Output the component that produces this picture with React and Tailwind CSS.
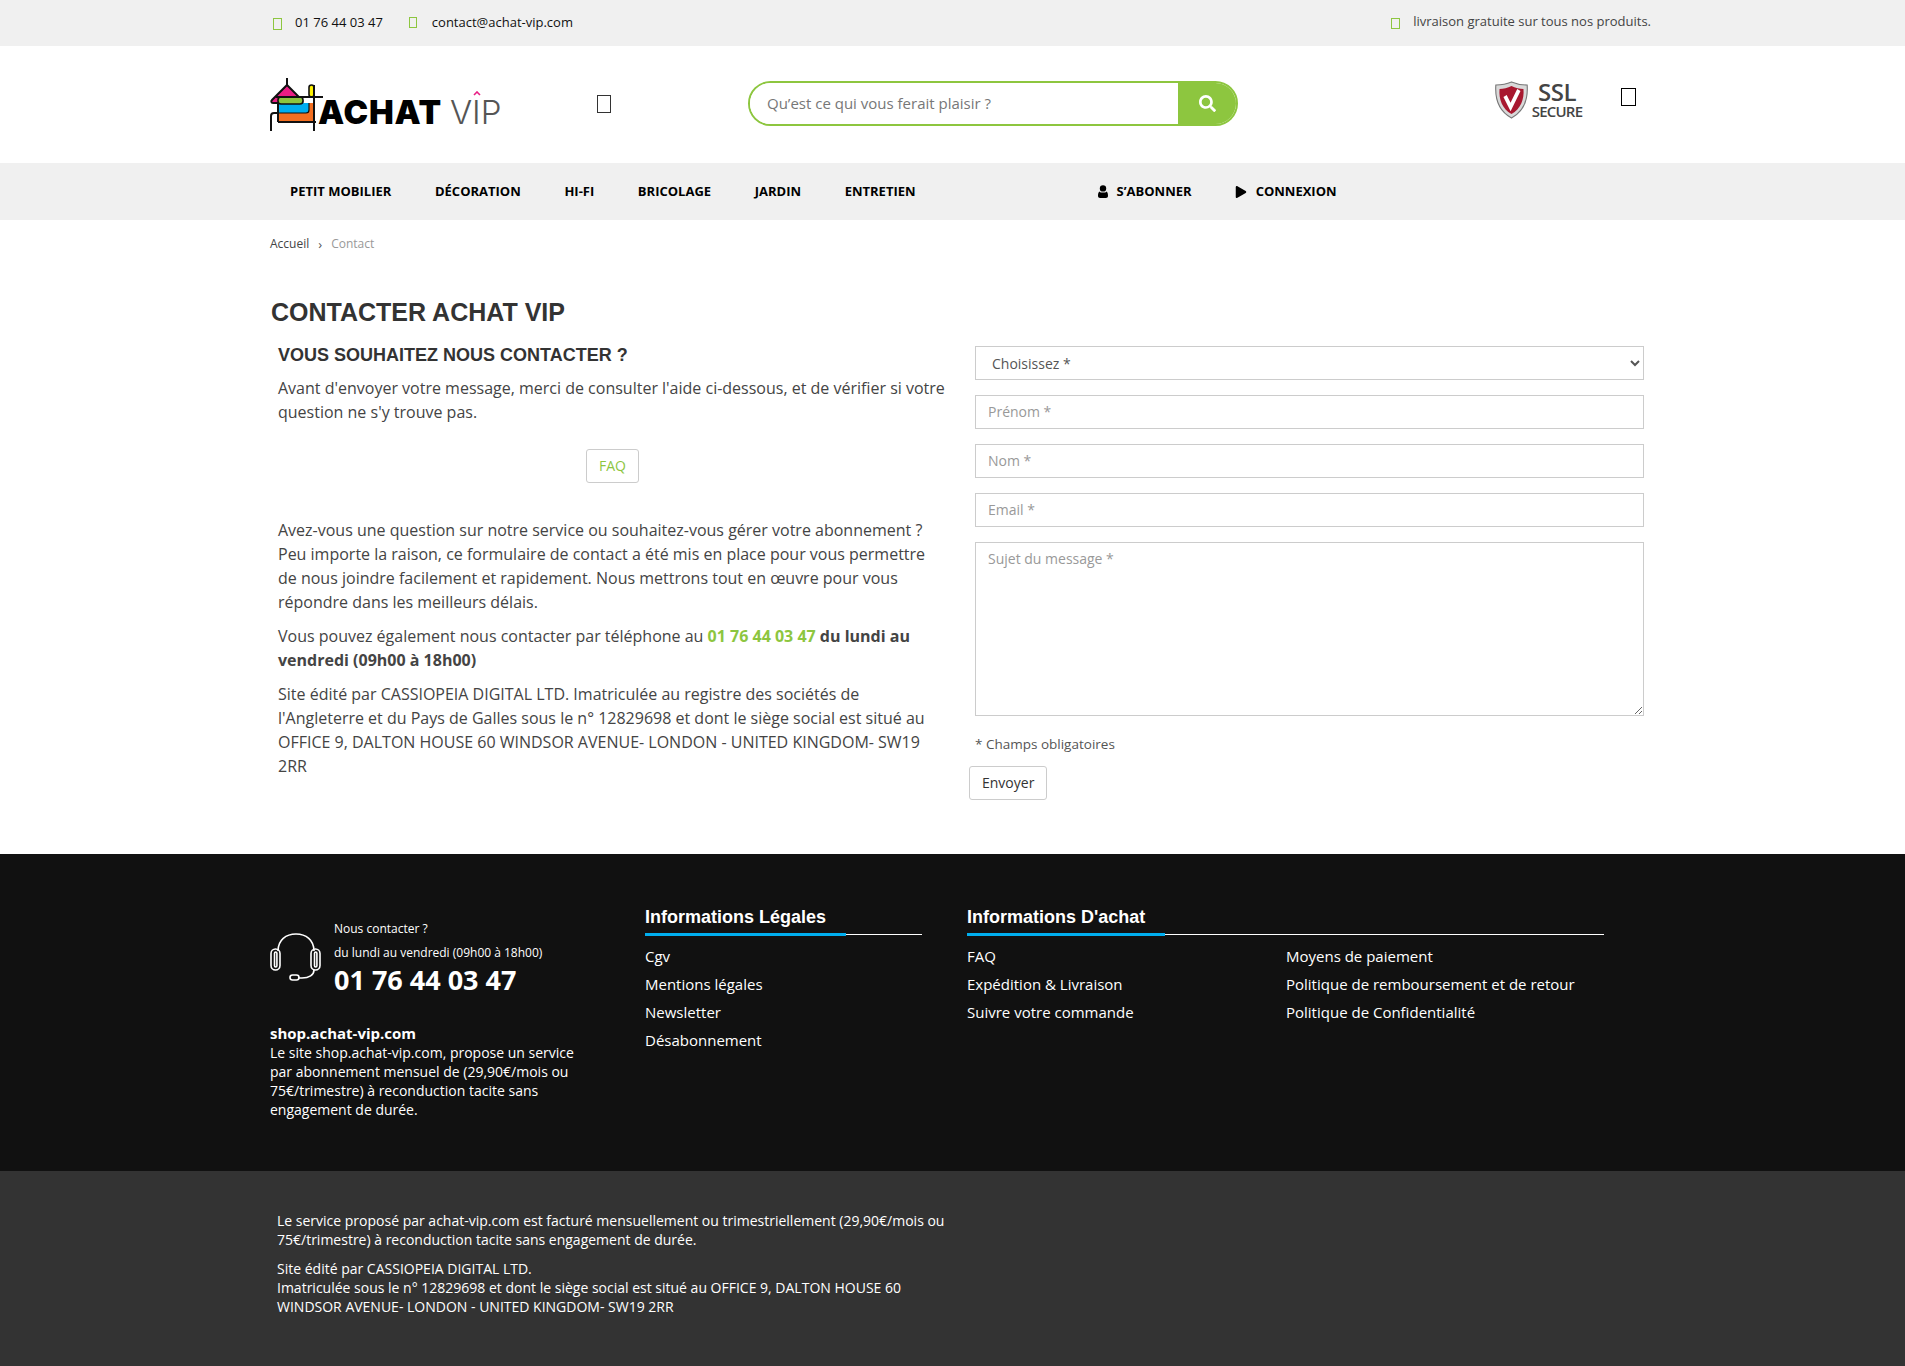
import { FaSearch, FaPlay } from "react-icons/fa";

const NAV = ["Petit mobilier", "Décoration", "Hi-Fi", "Bricolage", "Jardin", "Entretien"];

function Tofu({ className }) {
  return <span className={"inline-block border " + className} />;
}

function Logo() {
  return (
    <div className="relative flex h-[54px] w-[229px] items-end">
      <svg width="56" height="54" viewBox="0 0 56 54" fill="none" className="shrink-0">
        <path d="M8 25h36v16a3 3 0 0 1-3 3H8Z" fill="#f36f21" />
        <path d="M8 25h31v7c0 2-1 3-3 3H8Z" fill="#00aeef" />
        <path d="M17 0v7" stroke="#111" strokeWidth="2" />
        <path d="M17 7 32 22c1 2 0 3-1 3H3c-2 0-2-2-1-3Z" fill="#e91e84" stroke="#111" strokeWidth="2" />
        <rect x="39" y="7" width="5" height="12" rx="2.5" fill="#fff200" stroke="#111" strokeWidth="1.6" />
        <rect x="8" y="19" width="25" height="7" rx="3" fill="#8dc63f" stroke="#111" strokeWidth="1.6" />
        <path d="M6 19h47M44 7v46M8 44h38M1 53V38c0-2 1-3 3-3h4M8 26v18" stroke="#111" strokeWidth="2" />
        <path d="M39 25v7c0 2-1 3-3 3H8" stroke="#111" strokeWidth="1.2" />
      </svg>
      <span className="ml-[-8px] font-['Inter'] text-[33px] leading-[39px] font-black tracking-[0.8px] text-black">ACHAT</span>
      <span className="ml-[8px] font-['Inter'] text-[33px] leading-[39px] font-light text-[#555]">VIP</span>
      <svg width="8" height="5" viewBox="0 0 8 5" fill="none" className="absolute top-[13px] left-[203px]">
        <path d="M1 4 4 1l3 3" stroke="#e91e84" strokeWidth="1.6" />
      </svg>
    </div>
  );
}

function SslBadge() {
  return (
    <div className="flex h-[38px] w-[88px] items-center">
      <svg width="35" height="38" viewBox="0 0 38 38" preserveAspectRatio="none" className="shrink-0">
        <path d="M19 1c5 2 11 3 17 3 1 13-3 26-17 33C5 30 1 17 2 4c6 0 12-1 17-3Z" fill="#d9d9d9" stroke="#777" strokeWidth="1.2" />
        <path d="M19 5c4 2 9 3 13 3 1 10-3 20-13 25C9 28 5 18 6 8c4 0 9-1 13-3Z" fill="#a8182f" />
        <path d="m12 15 6 11 9-17" fill="none" stroke="#fff" strokeWidth="4" />
      </svg>
      <div className="ml-[3px] flex w-[50px] flex-col items-center font-['Open_Sans'] text-[#444]">
        <span className="text-[24px] leading-[24px] font-semibold tracking-[-0.5px]">SSL</span>
        <span className="text-[15px] leading-[15px] font-semibold tracking-[-0.8px]">SECURE</span>
      </div>
    </div>
  );
}

function UserGlyph() {
  return (
    <svg width="10" height="13" viewBox="0 0 10 13" fill="currentColor" className="shrink-0">
      <circle cx="5" cy="3.4" r="3.2" />
      <path d="M1.3 6.4C2.6 8 7.4 8 8.7 6.4 9.8 7.4 10 9.4 10 11c0 1.2-.9 2-2 2H2c-1.1 0-2-.8-2-2 0-1.6.2-3.6 1.3-4.6Z" />
    </svg>
  );
}

function Headset() {
  return (
    <svg width="52" height="50" viewBox="0 0 52 50" fill="none" stroke="#fff" strokeWidth="1.6" className="mt-[2px] shrink-0">
      <path d="M8 19C8 8 16 2 26 2s18 6 18 17" />
      <rect x="1" y="17" width="9" height="21" rx="4.5" />
      <rect x="4.5" y="20" width="2.4" height="15" rx="1.2" />
      <rect x="41" y="17" width="9" height="21" rx="4.5" />
      <rect x="44.5" y="20" width="2.4" height="15" rx="1.2" />
      <path d="M44 38c0 5-5 8-12 8h-4" />
      <rect x="20" y="43" width="9" height="5" rx="2.5" />
    </svg>
  );
}

function FooterHeading({ title, barClass }) {
  return (
    <div className="relative border-b border-white pb-[5px]">
      <h3 className="font-['Liberation_Sans'] text-[18px] leading-[24px] font-bold text-white">{title}</h3>
      <div className={"absolute bottom-[-2px] left-0 h-[3px] bg-[#00aeef] " + barClass} />
    </div>
  );
}

function FooterLinks({ items }) {
  return (
    <ul className="flex flex-col gap-[6px] text-[15px] leading-[22px] text-white">
      {items.map((item) => (
        <li key={item}>{item}</li>
      ))}
    </ul>
  );
}

const fieldClass = "h-[34px] w-full border border-[#ccc] bg-white px-3 text-[14px] text-[#555] placeholder:text-[#999] outline-none";

export default function App() {
  return (
    <div className="min-h-[1366px] bg-white font-['Open_Sans',sans-serif] text-[#333]">
      <div className="h-[46px] bg-[#f0f0f0]">
        <div className="ml-[270px] flex h-full w-[1380px] items-center justify-between text-[13px]">
          <div className="flex items-center text-[#111]">
            <Tofu className="mr-[13px] ml-[3px] mt-[2px] h-[12px] w-[9px] border-[#8dc63f]" />
            <span>01 76 44 03 47</span>
            <Tofu className="mr-[15px] ml-[26px] mb-[2px] h-[11px] w-[8px] border-[#8dc63f]" />
            <span>contact@achat-vip.com</span>
          </div>
          <div className="mr-[-1px] mb-[2px] flex items-center text-[#444]">
            <Tofu className="mr-[13px] mt-[3px] h-[11px] w-[9px] border-[#8dc63f]" />
            <span>livraison gratuite sur tous nos produits.</span>
          </div>
        </div>
      </div>

      <header className="ml-[270px] flex h-[117px] w-[1380px] items-center">
        <Logo />
        <Tofu className="mt-[-2px] ml-[98px] h-[18px] w-[14px] border-[#333]" />
        <form className="mb-[2px] ml-[137px] flex h-[45px] w-[490px] overflow-hidden rounded-full border-2 border-[#8dc63f]">
          <input
            className="min-w-0 flex-1 bg-white pl-[17px] text-[15px] text-[#555] placeholder:text-[#777] outline-none"
            placeholder="Qu’est ce qui vous ferait plaisir ?"
          />
          <button type="button" className="flex w-[58px] items-center justify-center bg-[#8dc63f] text-white">
            <FaSearch className="text-[17px]" />
          </button>
        </form>
        <div className="mr-[13px] mb-[10px] ml-auto flex items-center gap-[39px]">
          <SslBadge />
          <Tofu className="mr-[1px] mb-[6px] h-[18px] w-[15px] border-black" />
        </div>
      </header>

      <nav className="h-[57px] bg-[#f0f0f0]">
        <div className="ml-[270px] flex h-full w-[1380px] items-center pl-[20px] text-[13px] font-bold text-black uppercase">
          <ul className="flex items-center gap-[43.6px]">
            {NAV.map((item) => (
              <li key={item}>{item}</li>
            ))}
          </ul>
          <div className="ml-[182px] flex items-center gap-[9px]">
            <UserGlyph />
            <span>S’abonner</span>
          </div>
          <div className="ml-[43px] flex items-center gap-[9px]">
            <FaPlay className="text-[12px]" />
            <span>Connexion</span>
          </div>
        </div>
      </nav>

      <main className="ml-[270px] h-[634px] w-[1380px]">
        <div className="flex h-[48px] items-center gap-[9px] text-[12px]">
          <span className="text-[#444]">Accueil</span>
          <span className="text-[13px] leading-none text-[#555]">›</span>
          <span className="text-[#999]">Contact</span>
        </div>
        <h1 className="mt-[29px] ml-[1px] font-['Liberation_Sans'] text-[25px] leading-[30px] font-bold text-[#333]">
          CONTACTER ACHAT VIP
        </h1>
        <div className="mt-[16px] flex">
          <section className="ml-[8px] w-[668px] text-[16px] leading-[24px] text-[#444]">
            <h2 className="font-['Liberation_Sans'] text-[18px] leading-[24px] font-bold text-[#333]">
              VOUS SOUHAITEZ NOUS CONTACTER ?
            </h2>
            <p className="mt-[9px]">
              Avant d'envoyer votre message, merci de consulter l'aide ci-dessous, et de vérifier si votre question ne s'y trouve pas.
            </p>
            <div className="mt-[25px] flex justify-center">
              <button type="button" className="ml-[1px] h-[34px] w-[53px] rounded-[3px] border border-[#ccc] text-[14px] text-[#8dc63f]">
                FAQ
              </button>
            </div>
            <p className="mt-[35px]">
              Avez-vous une question sur notre service ou souhaitez-vous gérer votre abonnement ? Peu importe la raison, ce formulaire de contact a été mis en place pour vous permettre de nous joindre facilement et rapidement. Nous mettrons tout en œuvre pour vous répondre dans les meilleurs délais.
            </p>
            <p className="mt-[10px]">
              Vous pouvez également nous contacter par téléphone au <b className="text-[#8dc63f]">01 76 44 03 47</b> <b>du lundi au vendredi (09h00 à 18h00)</b>
            </p>
            <p className="mt-[10px]">
              Site édité par CASSIOPEIA DIGITAL LTD. Imatriculée au registre des sociétés de l'Angleterre et du Pays de Galles sous le n° 12829698 et dont le siège social est situé au OFFICE 9, DALTON HOUSE 60 WINDSOR AVENUE- LONDON - UNITED KINGDOM- SW19 2RR
            </p>
          </section>
          <form className="ml-[29px] w-[669px]">
            <div className="flex flex-col gap-[15px] pt-[3px]">
              <select className={fieldClass + " pl-[12px]"} defaultValue="">
                <option value="">Choisissez *</option>
              </select>
              <input className={fieldClass + " pb-[2px]"} placeholder="Prénom *" />
              <input className={fieldClass + " pb-[2px]"} placeholder="Nom *" />
              <input className={fieldClass + " pb-[2px]"} placeholder="Email *" />
              <textarea className={fieldClass + " block h-[174px] resize-y py-[6px] leading-[20px]"} placeholder="Sujet du message *" />
            </div>
            <p className="mt-[18px] text-[13.5px] leading-[20px] text-[#555]">* Champs obligatoires</p>
            <button type="button" className="mt-[12px] ml-[-6px] block h-[34px] rounded-[3px] border border-[#ccc] px-[12px] pb-[2px] text-[14px] text-[#333]">
              Envoyer
            </button>
          </form>
        </div>
      </main>

      <footer className="h-[317px] bg-[#111] text-white">
        <div className="ml-[270px] flex w-[1380px] pt-[51px]">
          <div className="w-[375px] pt-[12px]">
            <div className="flex">
              <div className="pt-[13px]">
                <Headset />
              </div>
              <div className="ml-[12px]">
                <p className="text-[12px] leading-[24px]">Nous contacter ?</p>
                <p className="text-[12px] leading-[24px]">du lundi au vendredi (09h00 à 18h00)</p>
                <p className="text-[27px] leading-[30px] font-bold">01 76 44 03 47</p>
              </div>
            </div>
            <p className="mt-[29px] w-[310px] text-[14px] leading-[19px]">
              <b className="text-[15px]">shop.achat-vip.com</b>
              <br />
              Le site shop.achat-vip.com, propose un service par abonnement mensuel de (29,90€/mois ou 75€/trimestre) à reconduction tacite sans engagement de durée.
            </p>
          </div>
          <div className="w-[277px]">
            <FooterHeading title="Informations Légales" barClass="w-[201px]" />
            <div className="mt-[10px]">
              <FooterLinks items={["Cgv", "Mentions légales", "Newsletter", "Désabonnement"]} />
            </div>
          </div>
          <div className="ml-[45px] w-[637px]">
            <FooterHeading title="Informations D'achat" barClass="w-[198px]" />
            <div className="mt-[10px] grid grid-cols-[319px_1fr]">
              <FooterLinks items={["FAQ", "Expédition & Livraison", "Suivre votre commande"]} />
              <FooterLinks items={["Moyens de paiement", "Politique de remboursement et de retour", "Politique de Confidentialité"]} />
            </div>
          </div>
        </div>
      </footer>

      <div className="h-[195px] bg-[#333] text-white">
        <div className="ml-[270px] w-[1380px] pt-[40px] pl-[7px] text-[14px] leading-[19px]">
          <p className="w-[680px]">
            Le service proposé par achat-vip.com est facturé mensuellement ou trimestriellement (29,90€/mois ou 75€/trimestre) à reconduction tacite sans engagement de durée.
          </p>
          <p className="mt-[10px] w-[680px]">
            Site édité par CASSIOPEIA DIGITAL LTD.
            <br />
            Imatriculée sous le n° 12829698 et dont le siège social est situé au OFFICE 9, DALTON HOUSE 60 WINDSOR AVENUE- LONDON - UNITED KINGDOM- SW19 2RR
          </p>
        </div>
      </div>
    </div>
  );
}
